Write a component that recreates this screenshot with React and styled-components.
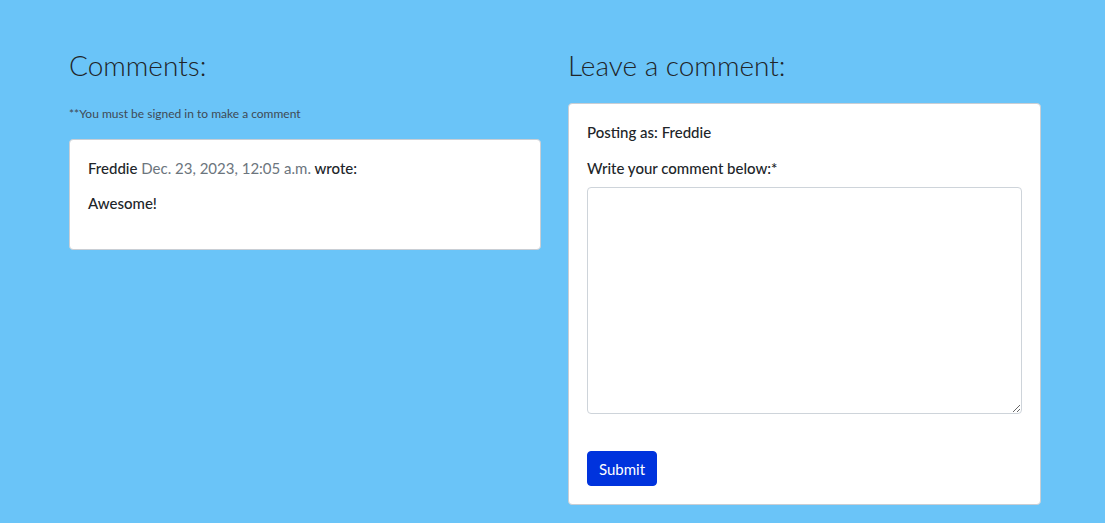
import React from "react";
import styled, { createGlobalStyle } from "styled-components";

const GlobalStyle = createGlobalStyle`
  html, body {
    margin: 0;
    padding: 0;
    background: #6ac4f8;
    font-family: "Lato", "Noto Sans", sans-serif;
    color: #212529;
  }
  * { box-sizing: border-box; }
`;

const Page = styled.div`
  min-height: 523px;
  background: #6ac4f8;
  padding: 48px 64px 18px 69px;
`;

const Row = styled.div`
  display: grid;
  grid-template-columns: 472px 473px;
  column-gap: 27px;
  align-items: start;
`;

const Column = styled.section`
  display: flex;
  flex-direction: column;
`;

const Heading = styled.h3`
  margin: 0;
  font-size: 28px;
  font-weight: 300;
  line-height: 34px;
  color: #212529;
`;

const Notice = styled.p`
  margin: 24px 0 0;
  font-size: 12px;
  line-height: 16px;
  color: #3f4a55;
`;

const Card = styled.div`
  background: #fff;
  border: 1px solid #c9ced4;
  border-radius: 4px;
  margin-top: ${(p) => p.$top}px;
  padding: ${(p) => p.$pad};
`;

const Meta = styled.p`
  margin: 0 0 11px;
  font-size: 15px;
  line-height: 24px;
  font-weight: 500;
`;

const Date = styled.span`
  color: #6c757d;
  font-weight: 400;
`;

const Body = styled.p`
  margin: 0;
  font-size: 15px;
  line-height: 24px;
  font-weight: 500;
`;

const Label = styled.label`
  display: block;
  margin: 0 0 7px;
  font-size: 15px;
  line-height: 24px;
  font-weight: 500;
`;

const Posting = styled.p`
  margin: 0 0 12px;
  font-size: 15px;
  line-height: 24px;
  font-weight: 500;
`;

const TextArea = styled.textarea`
  display: block;
  width: 100%;
  height: 227px;
  border: 1px solid #ced4da;
  border-radius: 4px;
  font-family: inherit;
  font-size: 15px;
  padding: 6px 12px;
  resize: vertical;
`;

const SubmitButton = styled.button`
  margin-top: 37px;
  background: #0033dd;
  color: #fff;
  border: 1px solid #0033dd;
  border-radius: 4px;
  font-family: inherit;
  font-size: 15px;
  padding: 0 11px;
  height: 35px;
  cursor: pointer;
`;

export default function App() {
  return (
    <>
      <GlobalStyle />
      <Page>
        <Row>
          <Column>
            <Heading>Comments:</Heading>
            <Notice>**You must be signed in to make a comment</Notice>
            <Card $top={17} $pad="16px 18px 34px">
              <Meta>
                Freddie <Date>Dec. 23, 2023, 12:05 a.m.</Date> wrote:
              </Meta>
              <Body>Awesome!</Body>
            </Card>
          </Column>
          <Column>
            <Heading>Leave a comment:</Heading>
            <Card $top={21} $pad="16px 18px 18px">
              <Posting>Posting as: Freddie</Posting>
              <form onSubmit={(e) => e.preventDefault()}>
                <Label htmlFor="body">Write your comment below:*</Label>
                <TextArea id="body" />
                <SubmitButton type="submit">Submit</SubmitButton>
              </form>
            </Card>
          </Column>
        </Row>
      </Page>
    </>
  );
}
